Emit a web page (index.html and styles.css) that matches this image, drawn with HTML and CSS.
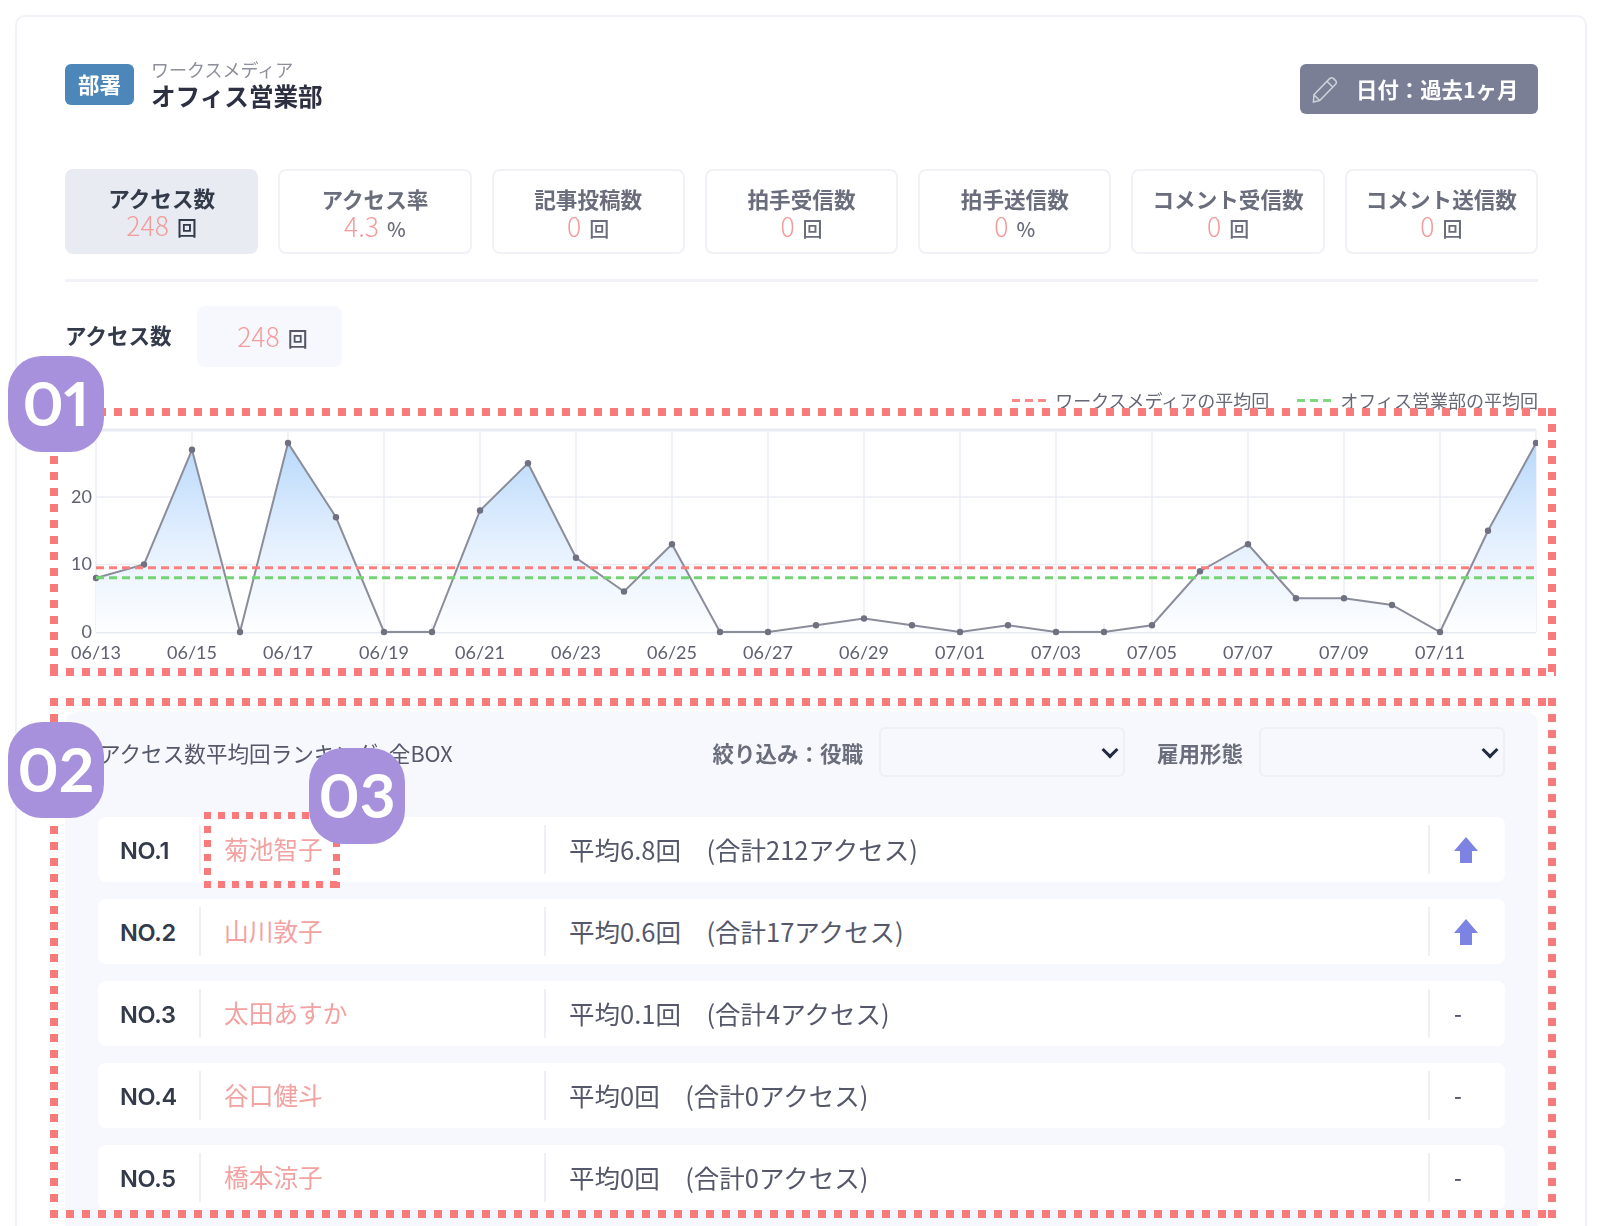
FILE: index.html
```html
<!DOCTYPE html>
<html lang="ja">
<head>
<meta charset="utf-8">
<title>アクセス数</title>
<link rel="stylesheet" href="styles.css">
</head>
<body>
<div class="page">
  <main class="card">
    <header class="head">
      <div class="dept">
        <span class="dept-badge">部署</span>
        <div class="dept-names">
          <span class="dept-company">ワークスメディア</span>
          <strong class="dept-name">オフィス営業部</strong>
        </div>
      </div>
      <button class="date-btn" type="button">
        <svg class="pencil" viewBox="0 0 27 28"><path d="M2 20 18.500 3a2.600 2.600 0 0 1 3.700 0l2.300 2.300a2.600 2.600 0 0 1 0 3.700L8 26l-6.500 1.500zM15.500 6 21.500 12M2 20 8 26"/></svg>
        <span>日付：過去1ヶ月</span>
      </button>
    </header>

    <nav class="tabs">
      <div class="tab active"><span class="tab-label">アクセス数</span><span class="tab-value"><b>248</b><i>回</i></span></div>
      <div class="tab"><span class="tab-label">アクセス率</span><span class="tab-value"><b>4.3</b><i>%</i></span></div>
      <div class="tab"><span class="tab-label">記事投稿数</span><span class="tab-value"><b>0</b><i>回</i></span></div>
      <div class="tab"><span class="tab-label">拍手受信数</span><span class="tab-value"><b>0</b><i>回</i></span></div>
      <div class="tab"><span class="tab-label">拍手送信数</span><span class="tab-value"><b>0</b><i>%</i></span></div>
      <div class="tab"><span class="tab-label">コメント受信数</span><span class="tab-value"><b>0</b><i>回</i></span></div>
      <div class="tab"><span class="tab-label">コメント送信数</span><span class="tab-value"><b>0</b><i>回</i></span></div>
    </nav>

    <div class="rule"></div>

    <div class="metric">
      <span class="metric-label">アクセス数</span>
      <span class="metric-box"><b>248</b><i>回</i></span>
    </div>

    <div class="legend">
      <span class="legend-item"><span class="dash dash-red"></span>ワークスメディアの平均回</span>
      <span class="legend-item"><span class="dash dash-green"></span>オフィス営業部の平均回</span>
    </div>

    <svg class="chart" viewBox="0 0 1473 243" width="1473" height="243">
      <defs>
        <linearGradient id="areaFill" gradientUnits="userSpaceOnUse" x1="0" y1="18" x2="0" y2="207">
          <stop offset="0" stop-color="#b9d9fb"/>
          <stop offset="0.55" stop-color="#e6f1fe"/>
          <stop offset="1" stop-color="#fdfeff"/>
        </linearGradient>
        <marker id="dot" viewBox="0 0 8 8" refX="4" refY="4" markerWidth="8" markerHeight="8" markerUnits="userSpaceOnUse">
          <circle cx="4" cy="4" r="3.200" class="dot"/>
        </marker>
      </defs>
      <path class="grid" d="M31 5V207M127 5V207M223 5V207M319 5V207M415 5V207M511 5V207M607 5V207M703 5V207M799 5V207M895 5V207M991 5V207M1087 5V207M1183 5V207M1279 5V207M1375 5V207M1471 5V207"/>
      <path class="grid" d="M79 199V207M175 199V207M271 199V207M367 199V207M463 199V207M559 199V207M655 199V207M751 199V207M847 199V207M943 199V207M1039 199V207M1135 199V207M1231 199V207M1327 199V207M1423 199V207"/>
      <path class="grid" d="M31 72H1471M31 139.500H1471"/>
      <path class="grid-strong" d="M31 5H1471M31 207H1471"/>
      <polygon class="area" points="31,207 31,153 79,139.500 127,24.750 175,207 223,18 271,92.250 319,207 367,207 415,85.500 463,38.250 511,132.750 559,166.500 607,119.250 655,207 703,207 751,200.250 799,193.500 847,200.250 895,207 943,200.250 991,207 1039,207 1087,200.250 1135,146.250 1183,119.250 1231,173.250 1279,173.250 1327,180 1375,207 1423,105.750 1471,18 1471,207"/>
      <polyline class="series" points="31,153 79,139.500 127,24.750 175,207 223,18 271,92.250 319,207 367,207 415,85.500 463,38.250 511,132.750 559,166.500 607,119.250 655,207 703,207 751,200.250 799,193.500 847,200.250 895,207 943,200.250 991,207 1039,207 1087,200.250 1135,146.250 1183,119.250 1231,173.250 1279,173.250 1327,180 1375,207 1423,105.750 1471,18"/>
      <line class="avg-red" x1="31" y1="142.700" x2="1471" y2="142.700"/>
      <line class="avg-green" x1="31" y1="152.700" x2="1471" y2="152.700"/>
      <g class="y-labels">
        <text x="27" y="78">20</text>
        <text x="27" y="145">10</text>
        <text x="27" y="213">0</text>
      </g>
      <g class="x-labels">
        <text x="31" y="234">06/13</text><text x="127" y="234">06/15</text><text x="223" y="234">06/17</text><text x="319" y="234">06/19</text><text x="415" y="234">06/21</text><text x="511" y="234">06/23</text><text x="607" y="234">06/25</text><text x="703" y="234">06/27</text><text x="799" y="234">06/29</text><text x="895" y="234">07/01</text><text x="991" y="234">07/03</text><text x="1087" y="234">07/05</text><text x="1183" y="234">07/07</text><text x="1279" y="234">07/09</text><text x="1375" y="234">07/11</text>
      </g>
    </svg>

    <section class="ranking">
      <div class="ranking-head">
        <h2 class="ranking-title">アクセス数平均回ランキング 全BOX</h2>
        <label class="filter-label" for="f1">絞り込み：役職</label>
        <span class="select-wrap"><select class="filter" id="f1"><option></option></select></span>
        <label class="filter-label second" for="f2">雇用形態</label>
        <span class="select-wrap"><select class="filter" id="f2"><option></option></select></span>
      </div>
      <div class="rows">
        <div class="row"><span class="cell no">NO.1</span><span class="cell name">菊池智子</span><span class="cell avg">平均6.8回　(合計212アクセス)</span><span class="cell trend"><svg class="up" viewBox="0 0 24 26"><path d="M12 0 24 14H18V26H6V14H0Z"/></svg></span></div>
        <div class="row"><span class="cell no">NO.2</span><span class="cell name">山川敦子</span><span class="cell avg">平均0.6回　(合計17アクセス)</span><span class="cell trend"><svg class="up" viewBox="0 0 24 26"><path d="M12 0 24 14H18V26H6V14H0Z"/></svg></span></div>
        <div class="row"><span class="cell no">NO.3</span><span class="cell name">太田あすか</span><span class="cell avg">平均0.1回　(合計4アクセス)</span><span class="cell trend">-</span></div>
        <div class="row"><span class="cell no">NO.4</span><span class="cell name">谷口健斗</span><span class="cell avg">平均0回　(合計0アクセス)</span><span class="cell trend">-</span></div>
        <div class="row"><span class="cell no">NO.5</span><span class="cell name">橋本涼子</span><span class="cell avg">平均0回　(合計0アクセス)</span><span class="cell trend">-</span></div>
      </div>
    </section>
  </main>

  <div class="frame frame-1"></div>
  <div class="frame frame-2"></div>
  <div class="frame frame-3"></div>
  <div class="marker marker-1">01</div>
  <div class="marker marker-2">02</div>
  <div class="marker marker-3">03</div>
</div>
</body>
</html>
```
FILE: styles.css
```css
* { box-sizing: border-box; }
html, body { margin: 0; padding: 0; background: #fff; }
body {
  font-family: "Noto Sans CJK JP", "Noto Sans", sans-serif;
  color: #333a4a;
}
.page {
  position: relative;
  width: 1600px;
  height: 1226px;
  overflow: hidden;
  padding: 15px 13px 0 15px;
}
.card {
  height: 1260px;
  border: 2px solid #f1f2f8;
  border-radius: 10px;
  padding: 46px 47px 0 48px;
  filter: blur(0.7px);
}

/* header */
.head { display: flex; justify-content: space-between; align-items: flex-start; height: 51px; }
.dept { display: flex; align-items: center; gap: 17px; margin-top: -5px; }
.dept-badge {
  width: 69px; height: 41px; margin-top: 1px; padding-bottom: 3px;
  display: flex; align-items: center; justify-content: center;
  background: #4d87b9; color: #fff; border-radius: 6px;
  font-size: 21.500px; font-weight: 700;
}
.dept-names { display: flex; flex-direction: column; }
.dept-company { font-size: 18px; line-height: 22px; color: #8d8f9a; }
.dept-name { font-size: 24.600px; line-height: 30px; font-weight: 700; color: #2c3040; }
.date-btn {
  width: 238px; height: 50px; margin-top: 1px; border: 0; border-radius: 6px;
  background: #7b7f95; color: #fff;
  font: 700 21.400px/1 "Noto Sans CJK JP", sans-serif;
  display: flex; align-items: center; gap: 18px; padding: 0 12px;
}
.pencil { width: 26px; height: 28px; flex: none; fill: none; stroke: #cfd1da; stroke-width: 1.6; }

/* tabs */
.tabs { display: grid; grid-template-columns: repeat(7, 1fr); gap: 20px; margin-top: 55px; }
.tab {
  height: 85px; border: 2px solid #f1f2f8; border-radius: 8px;
  padding-top: 16px;
  display: flex; flex-direction: column; align-items: center;
}
.tab.active { background: #e8ebf2; border-color: #e8ebf2; padding-top: 15px; }
.tab-label { font-size: 21.600px; line-height: 24px; font-weight: 700; color: #6a6d7b; }
.tab.active .tab-label { color: #333a4a; }
.tab-value { display: flex; align-items: baseline; height: 30px; color: #6a6d7b; }
.tab-value b, .metric-box b { font-size: 26.500px; line-height: 30px; font-weight: 300; color: #f39c9c; }
.tab-value i, .metric-box i { font-style: normal; font-size: 20px; line-height: 30px; font-weight: 500; margin-left: 8px; }
.tab.active .tab-value i { color: #333a4a; }

.rule { height: 3px; background: #f1f2f8; margin-top: 25px; }

/* metric */
.metric { display: flex; align-items: center; gap: 26px; margin-top: 24px; }
.metric-label { font-size: 21.500px; font-weight: 700; padding-bottom: 4px; }
.metric-box {
  width: 145px; height: 61px; border-radius: 8px; background: #f7f8fd; padding: 0 0 2px 5px;
  display: flex; align-items: baseline; justify-content: center; line-height: 59px;
  color: #555866;
}
.metric-box b, .metric-box i { line-height: 59px; }

/* legend */
.legend { display: flex; justify-content: flex-end; gap: 28px; margin-top: 23px; height: 20px; }
.legend-item { display: flex; align-items: center; gap: 9px; font-size: 18px; line-height: 20px; color: #666876; }
.dash { width: 34px; height: 3px; }
.dash-red { background: repeating-linear-gradient(90deg, #fa8a8a 0 8px, transparent 8px 13px); }
.dash-green { background: repeating-linear-gradient(90deg, #7ed97e 0 8px, transparent 8px 13px); }

/* chart */
.chart { display: block; margin-top: 15px; }
.grid { fill: none; stroke: #eceef5; stroke-width: 1.500; }
.grid-strong { fill: none; stroke: #e9ebf3; stroke-width: 3; }
.area { fill: url(#areaFill); stroke: none; }
.series { fill: none; stroke: #8b8d9a; stroke-width: 2; marker-start: url(#dot); marker-mid: url(#dot); marker-end: url(#dot); }
.dot { fill: #6f7180; }
.avg-red { stroke: #fa8080; stroke-width: 3; stroke-dasharray: 8 5; }
.avg-green { stroke: #74d474; stroke-width: 3; stroke-dasharray: 8 5; }
.y-labels text, .x-labels text { font-family: Lato, sans-serif; font-size: 18px; fill: #5f616e; }
.y-labels text { text-anchor: end; }
.x-labels text { text-anchor: middle; }

/* ranking */
.ranking {
  margin-top: 44px;
  background: #f7f8fd; border-radius: 12px;
  padding: 15px 33px 40px 33px;
}
.ranking-head { display: flex; align-items: center; height: 50px; }
.ranking-title { flex: 1; margin: 0 0 0 1px; font-size: 21.600px; font-weight: 400; color: #55586a; word-spacing: 6px; }
.filter-label { font-size: 21.500px; font-weight: 700; color: #6a6d7b; margin-right: 16px; }
.filter-label.second { margin-left: 32px; }
.select-wrap { position: relative; display: block; width: 246px; height: 50px; }
.select-wrap::after {
  content: ""; position: absolute; right: 9px; top: 17px;
  width: 9px; height: 9px;
  border-right: 3px solid #222a40; border-bottom: 3px solid #222a40;
  transform: rotate(45deg); pointer-events: none;
}
.filter {
  appearance: none; display: block;
  width: 100%; height: 100%; background: #f7f8fd;
  border: 2px solid #eff0f6; border-radius: 6px;
  font-size: 16px; color: #222;
}
.rows { display: flex; flex-direction: column; gap: 17px; margin-top: 40px; }
.row {
  display: grid; grid-template-columns: 101px 345px 1fr 77px;
  align-items: center; height: 65px; background: #fff; border-radius: 8px;
}
.cell { display: flex; align-items: center; height: 49px; padding-bottom: 3px; }
.cell + .cell { border-left: 2px solid #eff0f5; }
.no { padding: 2px 0 0 22px; font-family: Inter, sans-serif; font-size: 23.500px; letter-spacing: -0.3px; font-weight: 600; color: #333a4a; }
.name { padding-left: 23px; font-size: 24.700px; color: #f3a2a2; }
.avg { padding-left: 23px; font-size: 25.500px; color: #55586a; }
.trend { padding-left: 24px; font-size: 22px; font-weight: 500; color: #55586a; }
.up { width: 24px; height: 26px; margin-top: 3px; fill: #7c83e2; }

/* annotation overlays */
.frame {
  position: absolute;
  --c: #f87a7a;
  --t: 8px;
  background:
    repeating-linear-gradient(90deg, var(--c) 0 var(--t), transparent var(--t) calc(var(--t) * 2)) left top / 100% var(--t) no-repeat,
    repeating-linear-gradient(90deg, var(--c) 0 var(--t), transparent var(--t) calc(var(--t) * 2)) left bottom / 100% var(--t) no-repeat,
    repeating-linear-gradient(180deg, var(--c) 0 var(--t), transparent var(--t) calc(var(--t) * 2)) left top / var(--t) 100% no-repeat,
    repeating-linear-gradient(180deg, var(--c) 0 var(--t), transparent var(--t) calc(var(--t) * 2)) right top / var(--t) 100% no-repeat;
}
.frame-1 { left: 50px; top: 408px; width: 1506px; height: 268px; }
.frame-2 { left: 50px; top: 698px; width: 1506px; height: 520px; }
.frame-3 { left: 204px; top: 812px; width: 136px; height: 76px; --t: 7px; }
.marker {
  position: absolute; width: 96px; height: 96px; border-radius: 34px;
  background: #a791dd; color: #fff; padding-bottom: 5px;
  display: flex; align-items: center; justify-content: center;
  font-family: Lato, sans-serif; font-size: 62px; font-weight: 700;
  font-variant-numeric: proportional-nums;
}
.marker-1 { left: 8px; top: 356px; }
.marker-2 { left: 8px; top: 722px; }
.marker-3 { left: 309px; top: 748px; }
```
